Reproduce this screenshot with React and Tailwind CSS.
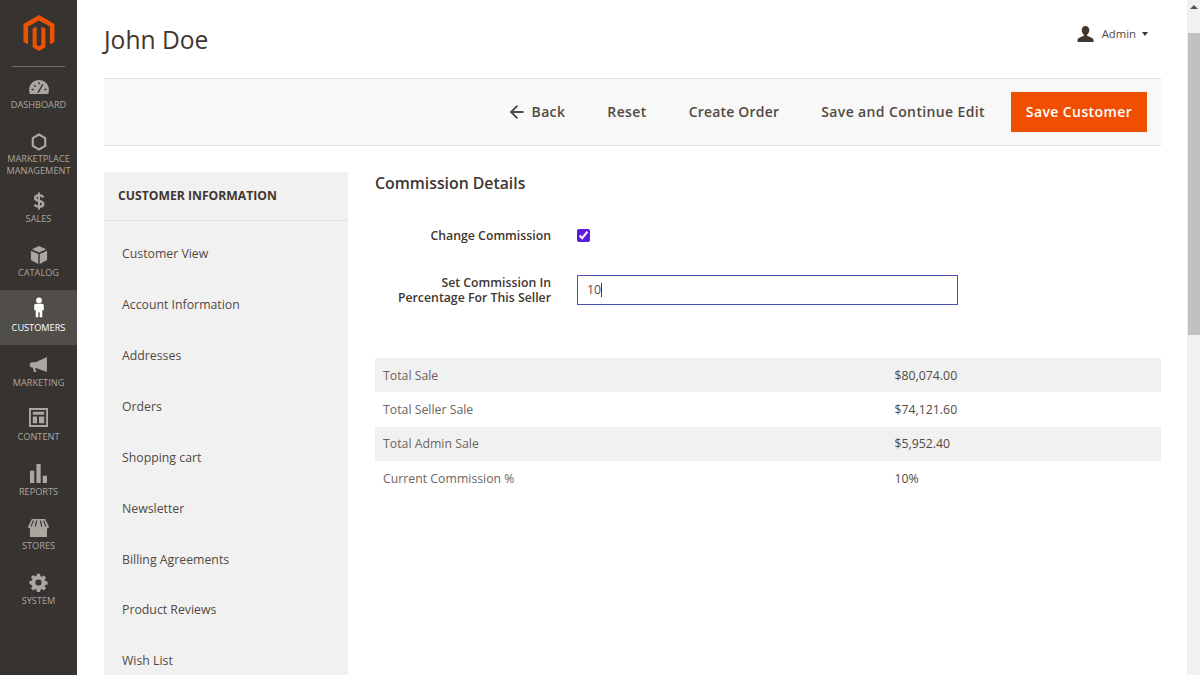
import React from 'react';
import { ArrowLeft } from 'lucide-react';

const LogoIcon = () => (
  <svg width="32" height="36" viewBox="0 0 32 36">
    <path fill="#eb5202" d="M16 0 31.5 9v18l-4.6 2.6V11.6L16 5.4 5.1 11.6v18L.5 27V9z" />
    <path fill="#eb5202" d="M16 36 9.6 32.3V13.7l4 -2.3v18.4l2.4 1.4 2.4-1.4V11.4l4 2.3v18.6z" />
  </svg>
);

const icons = {
  dashboard: (
    <svg width="20" height="14" viewBox="0 0 24 17">
      <path fill="#aaa6a0" d="M12 0C5.500 0 0 5 0 12c0 1.800.3 3.400.9 5h22.200c.6-1.600.9-3.200.9-5C24 5 18.500 0 12 0z" />
      <path stroke="#373330" strokeWidth="1.600" strokeLinecap="round" d="M11 15l5.500-9.500M3.500 11.500h1.500M6.500 6.500l1 1M12 3v1.500M19 11.500h1.500" />
    </svg>
  ),
  marketplace: (
    <svg width="16" height="18" viewBox="0 0 18 20">
      <path fill="none" stroke="#aaa6a0" strokeWidth="2.400" d="M9 1.600 16 5.600v8.800l-7 4-7-4V5.600z" />
    </svg>
  ),
  sales: (
    <svg width="12" height="18" viewBox="0 0 12 18">
      <path fill="none" stroke="#aaa6a0" strokeWidth="2.600" d="M10.400 5.200C9.400 3.800 7.800 3.200 6 3.200 3.800 3.200 2.200 4.300 2.200 6c0 4 8 2 8 6 0 1.700-1.700 2.800-4.200 2.800-1.800 0-3.500-.7-4.500-2.200" />
      <path fill="none" stroke="#aaa6a0" strokeWidth="2" d="M6 .5v17" />
    </svg>
  ),
  catalog: (
    <svg width="18" height="18" viewBox="0 0 20 20">
      <path fill="#aaa6a0" d="M10 0 18 3.600 10 7.200 2 3.600zM1 5.200l8.200 3.700V20L1 15.600zM19 5.200l-8.200 3.700V20l8.200-4.400z" />
    </svg>
  ),
  customers: (
    <svg width="12" height="21" viewBox="0 0 14 24">
      <circle cx="7" cy="3.600" r="3.400" fill="#fff" />
      <path fill="#fff" d="M3.400 7.600h7.200c1.200 0 2 1 2 2.200v5.400h-1.800v8.300H7.800v-6H6.200v6H3.200v-8.300H1.400V9.800c0-1.200.8-2.200 2-2.200z" />
    </svg>
  ),
  marketing: (
    <svg width="19" height="15" viewBox="0 0 20 17">
      <path fill="#aaa6a0" d="M19.500 0v17L7 12.600H6.200L7.600 17H5L3.400 12H2.600C1.200 12 0 10.600 0 9s1.200-3 2.600-3H7z" />
    </svg>
  ),
  content: (
    <svg width="19" height="19" viewBox="0 0 20 20">
      <path fill="#aaa6a0" fillRule="evenodd" d="M0 0h20v20H0zM2 2v16h16V2zM4 4h12v3H4zM4 9h4.500v7H4zM10.500 9H16v7h-5.500z" />
    </svg>
  ),
  reports: (
    <svg width="17" height="19" viewBox="0 0 18 20">
      <path fill="#aaa6a0" d="M0 7h4.500v13H0zM6.800 0h4.500v20H6.800zM13.500 12.500H18V20h-4.500z" />
    </svg>
  ),
  stores: (
    <svg width="21" height="18" viewBox="0 0 22 19">
      <path fill="#aaa6a0" fillRule="evenodd" d="M4 0h14l4 8c0 1.300-1 2-2 2v9H2v-9C1 10 0 9.300 0 8zM5 1.500 2.500 8h1.200L6.300 1.500zM8.300 1.500 7 8h1.300L9.600 1.500zM12.400 1.500 13.700 8H15l-1.300-6.500zM15.700 1.500 18.300 8h1.200L17 1.500z" />
    </svg>
  ),
  system: (
    <svg width="19" height="19" viewBox="-1 -1 22 22">
      <path fill="#aaa6a0" fillRule="evenodd" d="M8.200 0h3.600l.5 2.700 1.600.7 2.300-1.600 2.500 2.500-1.600 2.300.7 1.600 2.700.5v3.600l-2.700.5-.7 1.600 1.600 2.300-2.500 2.500-2.300-1.600-1.600.7-.5 2.700H8.200l-.5-2.700-1.600-.7-2.300 1.600-2.500-2.500 1.600-2.300-.7-1.600L-.5 11.800V8.200l2.700-.5.700-1.600-1.600-2.300 2.500-2.500 2.300 1.600 1.600-.7zM10 6.400a3.600 3.600 0 1 0 0 7.200 3.600 3.600 0 0 0 0-7.200z" />
    </svg>
  ),
};

const navItems = [
  { key: 'dashboard', label: ['DASHBOARD'] },
  { key: 'marketplace', label: ['MARKETPLACE', 'MANAGEMENT'] },
  { key: 'sales', label: ['SALES'] },
  { key: 'catalog', label: ['CATALOG'] },
  { key: 'customers', label: ['CUSTOMERS'], active: true, raised: true },
  { key: 'marketing', label: ['MARKETING'] },
  { key: 'content', label: ['CONTENT'], raised: true },
  { key: 'reports', label: ['REPORTS'] },
  { key: 'stores', label: ['STORES'] },
  { key: 'system', label: ['SYSTEM'] },
];

const menuLinks = [
  'Customer View',
  'Account Information',
  'Addresses',
  'Orders',
  'Shopping cart',
  'Newsletter',
  'Billing Agreements',
  'Product Reviews',
  'Wish List',
];

const stats = [
  { label: 'Total Sale', value: '$80,074.00' },
  { label: 'Total Seller Sale', value: '$74,121.60' },
  { label: 'Total Admin Sale', value: '$5,952.40' },
  { label: 'Current Commission %', value: '10%' },
];

const Sidebar = () => (
  <aside className="w-[77px] shrink-0 h-full bg-[#373330] flex flex-col items-stretch overflow-hidden">
    <div className="h-[67px] shrink-0 mx-[12px] border-b border-[#736e69] flex justify-center pt-[15px]">
      <LogoIcon />
    </div>
    <nav className="flex flex-col">
      {navItems.map((item) => (
        <div
          key={item.key}
          className={`flex flex-col items-center shrink-0 pt-[8px] ${item.key === 'marketplace' ? 'h-[59.200px]' : 'h-[54.600px]'} ${item.active ? 'bg-[#514d49] text-white font-medium' : 'text-[#aaa6a0]'}`}
        >
          <div className={`h-[24px] flex items-center justify-center ${item.raised ? 'pb-[4px]' : ''}`}>{icons[item.key]}</div>
          <div className={`flex flex-col items-center ${item.key === 'marketplace' ? '-mt-[1px]' : ''}`}>
            {item.label.map((line) => (
              <span key={line} className="text-[9.200px] leading-[12px] whitespace-nowrap">{line}</span>
            ))}
          </div>
        </div>
      ))}
    </nav>
  </aside>
);

const ToolbarButton = ({ children, tight }) => (
  <button className={`flex items-center gap-[5px] text-[14px] leading-[18px] font-semibold text-[#514943] ${tight ? 'tracking-[0.2px]' : 'tracking-[0.37px]'}`}>
    {children}
  </button>
);

export default function App() {
  return (
    <div className="w-[1200px] h-[675px] flex overflow-hidden bg-white font-['Open_Sans',sans-serif] text-[#41362f]">
      <Sidebar />

      <main className="flex-1 min-w-0 pl-[26px] pr-[26px] overflow-hidden">
        <header className="h-[78px] flex items-start justify-between">
          <h1 className="ml-[1px] text-[24.600px] leading-[36px] mt-[22px] text-[#41362f]">John Doe</h1>
          <div className="flex items-center mt-[26px] mr-[13px]">
            <svg width="17" height="16" viewBox="0 0 17 16">
              <path fill="#41362f" d="M8.500 0c2.300 0 3.800 1.700 3.800 4 0 2-1 3.700-2.100 4.600v1.300c2 .7 6.300 1.600 6.300 4.100V16H.5v-2c0-2.500 4.300-3.400 6.300-4.100V8.600C5.700 7.700 4.700 6 4.700 4c0-2.300 1.500-4 3.800-4z" />
            </svg>
            <span className="ml-[8px] mr-[1px] text-[11.300px] text-[#514943]">Admin</span>
            <span className="ml-[5px] w-0 h-0 border-x-[3.500px] border-x-transparent border-t-[4px] border-t-[#41362f]" />
          </div>
        </header>

        <div className="ml-[1px] h-[68px] bg-[#f8f8f8] border-y border-[#e3e3e3] flex items-center justify-end gap-[42px] pr-[14px]">
          <ToolbarButton>
            <ArrowLeft size={20} strokeWidth={2.200} />
            Back
          </ToolbarButton>
          <ToolbarButton>Reset</ToolbarButton>
          <ToolbarButton tight>Create Order</ToolbarButton>
          <div className="flex items-center gap-[26px]">
            <ToolbarButton>Save and Continue Edit</ToolbarButton>
            <button className="h-[40px] w-[136px] pb-[1px] bg-[#f04e00] text-white text-[14px] font-semibold tracking-[0.4px]">
              Save Customer
            </button>
          </div>
        </div>

        <div className="flex mt-[26px] ml-[1px] gap-[27px]">
          <section className="w-[244px] shrink-0 bg-[#f1f1f1] h-[600px]">
            <div className="h-[49px] border-b border-[#e3e3e3] flex items-center pl-[14px]">
              <h2 className="text-[12.200px] font-bold text-[#41362f]">CUSTOMER INFORMATION</h2>
            </div>
            <ul className="pt-[8px]">
              {menuLinks.map((link) => (
                <li key={link} className="h-[50.900px] flex items-center pl-[18px] text-[12.300px] text-[#514943]">
                  {link}
                </li>
              ))}
            </ul>
          </section>

          <section className="flex-1 min-w-0">
            <h2 className="text-[15.800px] leading-[22px] font-semibold text-[#41362f]">Commission Details</h2>

            <div className="flex items-center mt-[34px]">
              <label className="w-[176px] text-right text-[12.300px] leading-[15px] font-semibold text-[#41362f]">Change Commission</label>
              <input type="checkbox" defaultChecked className="ml-[26px] w-[13px] h-[13px] accent-[#5b1be0]" />
            </div>

            <div className="flex items-center mt-[32px]">
              <label className="w-[176px] text-right text-[12.300px] leading-[15px] font-semibold text-[#41362f]">
                Set Commission In<br />Percentage For This Seller
              </label>
              <div className="ml-[26px] w-[381px] h-[30px] border border-[#4a4fb8] flex items-center pl-[9px] text-[12.300px] text-[#514943]">
                10<span className="w-px h-[14px] bg-[#41362f]" />
              </div>
            </div>

            <div className="mt-[53px] text-[12.300px]">
              {stats.map((row, i) => (
                <div key={row.label} className={`flex items-center h-[34.300px] pt-[1.500px] ${i % 2 === 0 ? 'bg-[#f1f1f1]' : ''}`}>
                  <span className="w-[519.500px] pl-[8px] text-[#6d655e]">{row.label}</span>
                  <span className="text-[#514943]">{row.value}</span>
                </div>
              ))}
            </div>
          </section>
        </div>
      </main>

      {/* page scrollbar */}
      <div className="w-[13px] shrink-0 h-full bg-[#f1f1f1] flex flex-col items-center">
        <div className="h-[33px] w-full flex justify-center pt-[5px]">
          <span className="w-0 h-0 border-x-[4px] border-x-transparent border-b-[4px] border-b-[#505050]" />
        </div>
        <div className="w-[12px] ml-[1px] h-[302px] bg-[#c1c1c1]" />
      </div>
    </div>
  );
}
